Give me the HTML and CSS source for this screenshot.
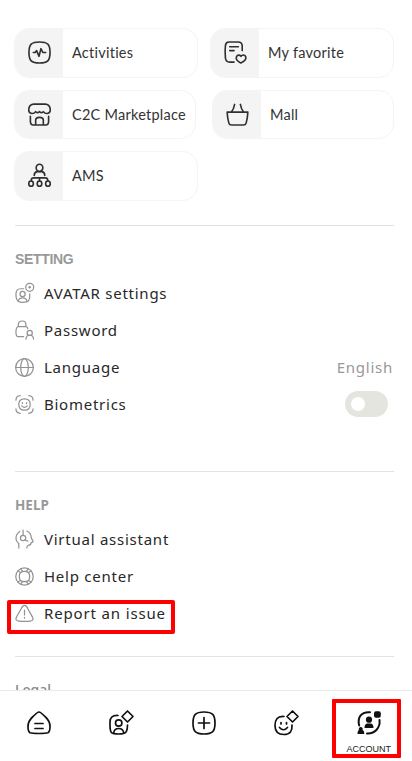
FILE: index.html
```html
<!DOCTYPE html>
<html lang="en">
<head>
<meta charset="utf-8">
<title>Account</title>
<link rel="stylesheet" href="styles.css">
</head>
<body>
<div class="app">
<main class="content">
  <section class="shortcuts">
    <div class="pair">
      <a class="card"><span class="tile"><svg viewBox="0 0 24 24"><path d="M12 1C20.500 1 23 3.500 23 12s-2.500 11-11 11S1 20.500 1 12 3.500 1 12 1Z"/><path d="M5.500 12h2l1.500-2 2.500 6 2-8 2 4h3"/></svg></span><span class="name">Activities</span></a>
      <a class="card"><span class="tile"><svg viewBox="0 0 24 24"><path d="M10.500 22H6Q2 22 1.500 18Q.8 10 1.500 4.500Q2 1.200 5 1.100H15Q18.700 1.200 19 5V10M6 6h9M6 10h4.500"/><path d="M17.500 23C13.500 21 12.200 18.500 13 16.500C14 14.200 16.500 14.400 17.700 16C19 14.100 22 14.200 22.700 16.500C23.300 19 21 21.500 17.500 23Z"/></svg></span><span class="name">My favorite</span></a>
    </div>
    <div class="pair second">
      <a class="card"><span class="tile"><svg viewBox="0 0 24 24"><path d="M6 1.200h12C24 1.500 25 10 20 11Q17.500 11.200 16 9Q14.500 11.200 12 9Q9.500 11.200 8 9Q6.500 11.200 4 11C-1 10 0 1.500 6 1.200Z"/><path d="M2.500 14v5q0 4 3 4h13q3 0 3-4v-5M8 23v-5q0-3 4-3t4 3v5"/></svg></span><span class="name">C2C Marketplace</span></a>
      <a class="card"><span class="tile"><svg viewBox="0 0 24 24"><path d="M1.200 9.500h21.600Q22.500 16 21 21Q20.500 23 18 23H6Q3.500 23 3 21Q1.500 16 1.200 9.500ZM5.500 9.500Q8 7 9 1.500M18.500 9.500Q16 7 15 1.500"/></svg></span><span class="name">Mall</span></a>
    </div>
    <div class="pair">
      <a class="card"><span class="tile"><svg viewBox="0 0 24 24"><ellipse cx="12" cy="4" rx="3.500" ry="3.800"/><path d="M6.500 12Q6.500 8.500 9.500 8h5q3 .5 3 4M12 14.500v3.500M3.500 18v-1.500Q3.500 14.500 6 14.500h12q2.500 0 2.500 2V18"/><ellipse cx="3.200" cy="20.500" rx="2.400" ry="2.700"/><ellipse cx="12" cy="20.500" rx="2.400" ry="2.700"/><ellipse cx="20.800" cy="20.500" rx="2.400" ry="2.700"/></svg></span><span class="name">AMS</span></a>
      <span></span>
    </div>
  </section>
  <section class="group setting">
    <h2>SETTING</h2>
    <div class="row"><svg viewBox="0 0 20 20"><path d="M9 5H6Q1 5 1 11T4 18.500Q8 20 13 18.500Q16 17 15.500 10.500"/><circle cx="8" cy="10.500" r="2.700"/><path d="M3.500 18q.5-3.500 4.500-3.500t4.500 3.500"/><circle cx="15.500" cy="3.500" r="4.200"/><circle class="dot" cx="15.500" cy="3.500" r="1.300"/></svg><span>AVATAR settings</span></div>
    <div class="row"><svg viewBox="0 0 20 20"><path d="M3.500 6V4Q3.500 0 7.500 0T11.500 4V6M9 16.500H3Q1 16 1 11.500T3 6H11Q13 6 13.500 8"/><circle cx="15.500" cy="12.500" r="2.700"/><path d="M11.500 19q.2-4 4-4t4 4"/></svg><span>Password</span></div>
    <div class="row"><svg viewBox="0 0 20 20"><circle cx="10" cy="10" r="9.300"/><ellipse cx="10" cy="10" rx="4" ry="9.300"/><path d="M.7 10h18.600"/></svg><span>Language</span><span class="value">English</span></div>
    <div class="row"><svg viewBox="0 0 20 20"><path d="M1 5.500Q1 1 5.500 .7M14.500 .7q4.500.3 4.500 4.800M1 14.500q0 4.500 4.500 4.800M14.500 19.300q4.500-.3 4.500-4.800"/><path d="M10 4Q16 4 16 10T10 16 4 10 10 4ZM7 11.500q3 3 6 0M7.800 8v1M12.200 8v1"/></svg><span>Biometrics</span><span class="switch"></span></div>
  </section>
  <section class="group help">
    <h2>HELP</h2>
    <div class="row"><svg viewBox="0 0 20 20"><path d="M5 1.500Q1 4 1 9Q1 12 4 14.500V19M12.500 1Q17 3 17 8L19 12Q19 13 17 13.200Q17 16 14 16.200Q12.500 16.500 12.500 19M8.500 0V5"/><circle cx="8.500" cy="8.500" r="2.800"/><path d="M10.500 10.500l3 1.200"/></svg><span>Virtual assistant</span></div>
    <div class="row"><svg viewBox="0 0 20 20"><circle cx="10" cy="10" r="9.200"/><path d="M10 4.500Q15.500 4.500 15.500 10T10 15.500 4.500 10 10 4.500ZM6 6L3 4M8 4.700L6 1.900M14 6l3-2M12 4.700l2-2.800M6 14l-3 2M8 15.300l-2 2.800M14 14l3 2M12 15.300l2 2.800"/></svg><span>Help center</span></div>
    <div class="row marked"><svg viewBox="0 0 20 20"><path d="M10 1.500Q12 1.500 13.500 5L18.300 13.500Q20.500 17.500 16 18Q10 18.600 4 18Q-.5 17.500 1.700 13.500L6.500 5Q8 1.500 10 1.500ZM10 6.500v5M10 14v1"/></svg><span class="issue">Report an issue</span></div>
  </section>
  <section class="group legal"><h2>Legal</h2></section>
</main>
<nav class="tabs">
  <a><svg viewBox="0 0 24 24"><path d="M12 1Q13.500 1 18 5.500Q23 10 23 15.500Q23 20.500 21 21.800Q19 22.500 12 22.500T3 21.800Q1 20.500 1 15.500Q1 10 6 5.500Q10.500 1 12 1ZM8 12.500h8M8 17.500h8"/></svg></a>
  <a><svg viewBox="0 0 24 24"><path d="M8 4.500Q0 4 0 11V15Q0 22 3 22.500Q9 23.500 13.500 22.500Q17.500 22 17.500 14"/><circle cx="8.700" cy="12" r="3.200"/><path d="M3.700 22q.5-4.500 5-4.500t5 4.500M17.500 0L23 5.500 17.500 11 12 5.500Z"/></svg></a>
  <a><svg viewBox="0 0 24 24"><path d="M12 1C20.500 1 23 3.500 23 12s-2.500 11-11 11S1 20.500 1 12 3.500 1 12 1ZM6.500 12h11M12 6.500v11"/></svg></a>
  <a><svg viewBox="0 0 24 24"><path d="M10 5.500C3 5 1 9 1 14.500C1 21 4 23.500 10 23.500S18.500 20 18 14M5.500 16.500Q9.500 21 13.500 16.500M7 11.500v1.500M12.500 11.500v1.500M18.500 0L24 5.500 18.500 11 13 5.500Z"/></svg></a>
  <a class="account"><svg viewBox="0 0 24 24"><path class="ring" d="M13 1.200C4 .5 .2 6.500 2.200 14.500M22.500 9C23.500 16.500 18 23 10 22.500"/><rect class="fill" x="17" y=".2" width="6.800" height="6.500" rx="2"/><circle class="fill" cx="12" cy="8.700" r="3.100"/><path class="fill" d="M7.500 17q0-4.200 3-4.400h3q3 .2 3 4.400ZM.5 23q0-3.500 1.500-4a2 2 0 1 1 3.500 0Q7.300 19.500 7.300 23Z"/></svg><span>ACCOUNT</span></a>
</nav>
</div>
</body>
</html>
```
FILE: styles.css
```css
*, *::before, *::after { box-sizing: border-box; }
body { margin: 0; background: #fff; font-family: "Noto Sans", sans-serif; color: #282828; }
.app { width: 412px; height: 761px; display: flex; flex-direction: column; overflow: hidden; }
.content { height: 690px; flex: none; overflow: hidden; padding: 28px 18px 0 14px; }
svg { fill: none; stroke: #303030; stroke-width: 1.7; stroke-linecap: round; stroke-linejoin: round; flex: none; overflow: visible; }
.shortcuts { display: flex; flex-direction: column; gap: 12px; height: 197px; }
.pair { display: grid; grid-template-columns: 184px 184px; gap: 12px; }
.pair.second { grid-template-columns: 182px 182px; gap: 16px; }
.card { display: flex; height: 49.500px; border: 1px solid #f4f4f4; border-radius: 15px; overflow: hidden; align-items: stretch; }
.tile { width: 48px; background: #f4f4f4; display: flex; align-items: center; justify-content: center; }
.tile svg { width: 23px; height: 23px; }
.name { font-family: Lato, sans-serif; font-size: 14.500px; letter-spacing: .25px; margin-left: 9px; margin-top: 1px; align-self: center; line-height: 20px; white-space: nowrap; color: #333; }
.group { border-top: 1px solid #e3e3e3; width: 379px; margin-left: 1px; }
.setting { height: 246px; }
.help { height: 185px; }
h2 { margin: 24px 0 16px; font-size: 13.500px; line-height: 18px; font-weight: 700; color: #999; }
.setting h2 { font-family: "Liberation Sans", sans-serif; font-size: 14px; letter-spacing: -.35px; }
.legal h2 { font-size: 14px; font-weight: 500; color: #888; }
.row { height: 37px; display: flex; align-items: center; font-size: 15px; font-weight: 450; line-height: 20px; letter-spacing: .75px; white-space: nowrap; position: relative; }
.row > span:not(.switch) { margin-top: -2px; }
.row svg { width: 19px; height: 19px; stroke: #929292; stroke-width: 1.300; margin-right: 10px; }
.row .dot { fill: #929292; stroke: none; }
h2 + .row { margin-top: -9px; }
.issue { letter-spacing: .85px; }
.value { margin-left: auto; margin-right: 1px; color: #999; }
.switch { margin-left: auto; margin-right: 6px; margin-top: -2px; width: 43px; height: 26px; border-radius: 13px; background: #e5e5e0; display: flex; align-items: center; padding-left: 6px; }
.switch::before { content: ""; width: 14px; height: 14px; border-radius: 50%; background: #fff; }
.marked::after { content: ""; position: absolute; left: -8px; top: 5px; width: 168px; height: 34px; border: 4px solid #f00; border-radius: 2px; }
.tabs { height: 71px; border-top: 1px solid #e9e9e9; display: flex; }
.tabs a { width: 82.500px; padding-top: 20px; display: flex; flex-direction: column; align-items: center; position: relative; left: -2px; }
.tabs svg { width: 24px; height: 24px; stroke: #111; }
.account span { font: 9px/10px "Liberation Sans", sans-serif; color: #222; margin-top: 9px; }
.account::after { content: ""; position: absolute; left: 4px; top: 8px; width: 69px; height: 59px; border: 4px solid #f00; border-radius: 1px; }
.tabs .fill { fill: #111; stroke: none; }
.tabs .ring { stroke-width: 2; }
```
